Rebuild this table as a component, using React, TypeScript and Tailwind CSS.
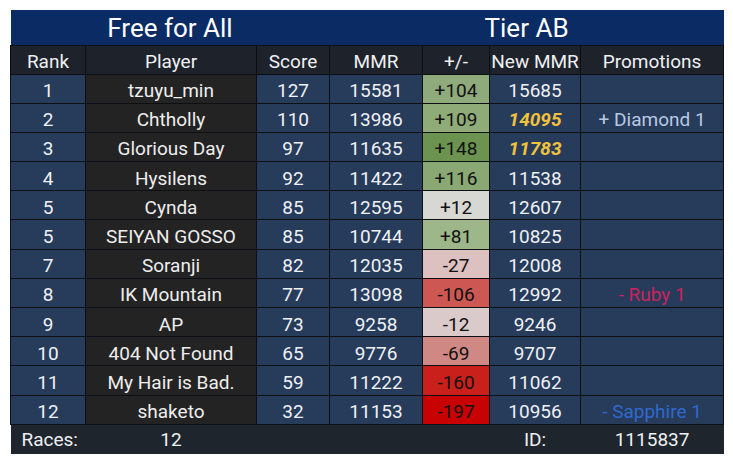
import React from 'react';

interface Row {
  rank: number;
  player: string;
  score: number;
  mmr: number;
  delta: string;
  deltaBg: string;
  newMmr: number;
  highlight?: boolean;
  promo?: string;
  promoColor?: string;
}

const rows: Row[] = [
  { rank: 1, player: 'tzuyu_min', score: 127, mmr: 15581, delta: '+104', deltaBg: 'bg-[#8fab7b]', newMmr: 15685 },
  { rank: 2, player: 'Chtholly', score: 110, mmr: 13986, delta: '+109', deltaBg: 'bg-[#8eab78]', newMmr: 14095, highlight: true, promo: '+ Diamond 1', promoColor: 'text-[#b9c9e2]' },
  { rank: 3, player: 'Glorious Day', score: 97, mmr: 11635, delta: '+148', deltaBg: 'bg-[#6c9350]', newMmr: 11783, highlight: true },
  { rank: 4, player: 'Hysilens', score: 92, mmr: 11422, delta: '+116', deltaBg: 'bg-[#8aa874]', newMmr: 11538 },
  { rank: 5, player: 'Cynda', score: 85, mmr: 12595, delta: '+12', deltaBg: 'bg-[#d7d8d3]', newMmr: 12607 },
  { rank: 5, player: 'SEIYAN GOSSO', score: 85, mmr: 10744, delta: '+81', deltaBg: 'bg-[#9db78b]', newMmr: 10825 },
  { rank: 7, player: 'Soranji', score: 82, mmr: 12035, delta: '-27', deltaBg: 'bg-[#ddc0c0]', newMmr: 12008 },
  { rank: 8, player: 'IK Mountain', score: 77, mmr: 13098, delta: '-106', deltaBg: 'bg-[#cd5752]', newMmr: 12992, promo: '- Ruby 1', promoColor: 'text-[#c8245f]' },
  { rank: 9, player: 'AP', score: 73, mmr: 9258, delta: '-12', deltaBg: 'bg-[#dacaca]', newMmr: 9246 },
  { rank: 10, player: '404 Not Found', score: 65, mmr: 9776, delta: '-69', deltaBg: 'bg-[#d08884]', newMmr: 9707 },
  { rank: 11, player: 'My Hair is Bad.', score: 59, mmr: 11222, delta: '-160', deltaBg: 'bg-[#c9201b]', newMmr: 11062 },
  { rank: 12, player: 'shaketo', score: 32, mmr: 11153, delta: '-197', deltaBg: 'bg-[#c80202]', newMmr: 10956, promo: '- Sapphire 1', promoColor: 'text-[#2f69cc]' }
];

const cell = 'h-[29.2px] border border-[#0c0f14] text-center p-0 pt-[4px] leading-none';
const blue = 'bg-[#273b5b] text-[#eef1f5]';

export default function App() {
  return (
    <div className="bg-white w-[733px] h-[465px] p-[10px] font-['Roboto',sans-serif]">
      <table className="w-[713px] table-fixed border-collapse text-[19px]">
        <colgroup>
          <col className="w-[75px]" />
          <col className="w-[171px]" />
          <col className="w-[73px]" />
          <col className="w-[93px]" />
          <col className="w-[67px]" />
          <col className="w-[91px]" />
          <col className="w-[143px]" />
        </colgroup>
        <thead>
          <tr className="bg-[#0a2b63] text-white">
            <th colSpan={3} className="h-[35px] p-0 pt-[2px] text-[26px] font-normal leading-none">Free for All</th>
            <th colSpan={4} className="h-[35px] p-0 pt-[2px] text-[26px] font-normal leading-none">Tier AB</th>
          </tr>
          <tr className="bg-[#1e232b] text-[#eef0f3]">
            {['Rank', 'Player', 'Score', 'MMR', '+/-', 'New MMR', 'Promotions'].map(h => (
              <th key={h} className={`${cell} !h-[29px] font-normal`}>{h}</th>
            ))}
          </tr>
        </thead>
        <tbody>
          {rows.map((r, i) => (
            <tr key={i}>
              <td className={`${cell} ${blue}`}>{r.rank}</td>
              <td className={`${cell} bg-[#232323] text-[#eeeeee]`}>{r.player}</td>
              <td className={`${cell} ${blue}`}>{r.score}</td>
              <td className={`${cell} ${blue}`}>{r.mmr}</td>
              <td className={`${cell} ${r.deltaBg} text-[#111111]`}>{r.delta}</td>
              <td className={`${cell} ${blue}`}>
                {r.highlight ? <span className="font-bold italic text-[#f2c23b]">{r.newMmr}</span> : r.newMmr}
              </td>
              <td className={`${cell} ${blue}`}>
                {r.promo && <span className={r.promoColor}>{r.promo}</span>}
              </td>
            </tr>
          ))}
        </tbody>
        <tfoot>
          <tr className="bg-[#1f252d] text-[#eef0f3]">
            <td className="h-[30px] p-0 pl-[11px] text-left leading-none">Races:</td>
            <td className="h-[30px] p-0 text-center leading-none">12</td>
            <td />
            <td />
            <td />
            <td className="h-[30px] p-0 text-center leading-none">ID:</td>
            <td className="h-[30px] p-0 text-center leading-none">1115837</td>
          </tr>
        </tfoot>
      </table>
    </div>
  );
}
